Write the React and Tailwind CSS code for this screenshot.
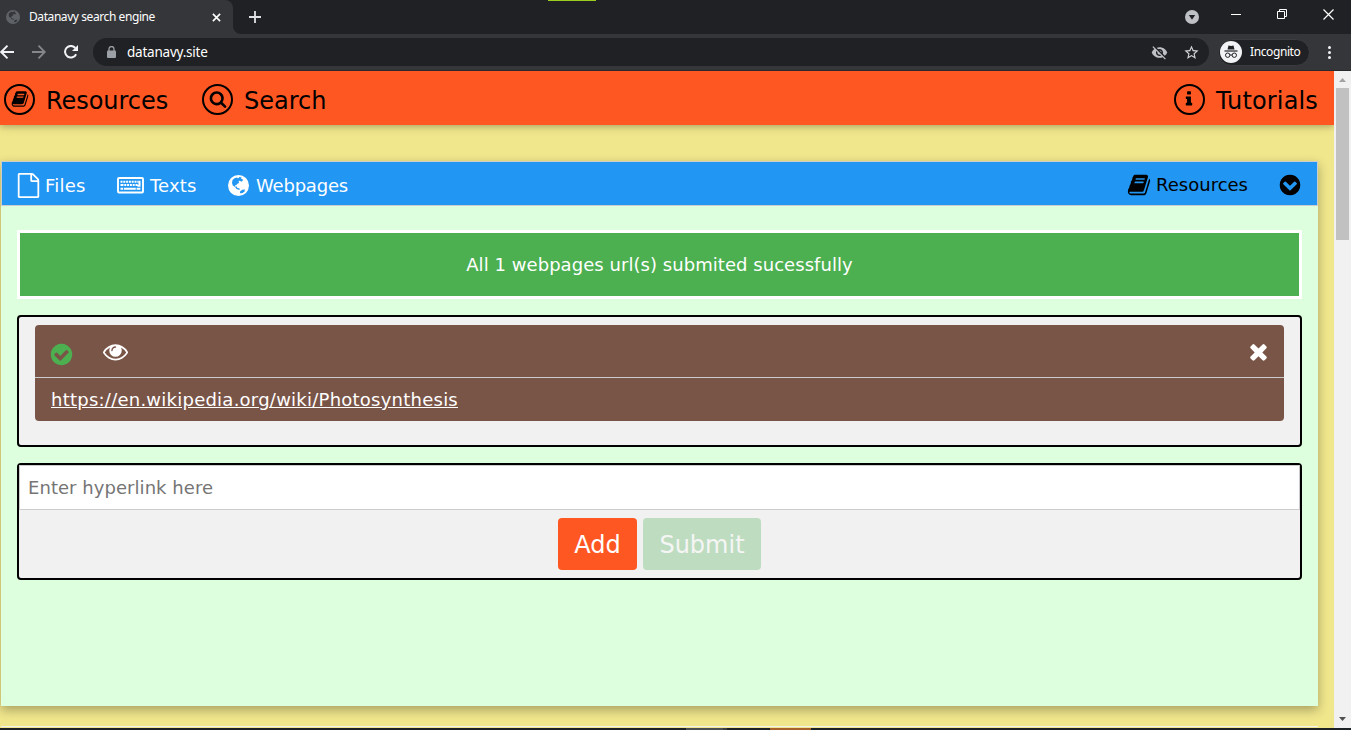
import React from "react";

const PATHS = {
  book: "M1703 478q40 57 18 129l-275 906q-19 64-76.5 107.5t-122.5 43.5h-923q-77 0-148.5-53.5t-99.5-131.5q-24-67-2-127 0-4 3-27t4-37q1-8-3-21.5t-3-19.5q2-11 8-21t16.5-23.5 16.5-23.5q23-38 45-91.5t30-91.5q3-10 .5-30t-.5-28q3-11 17-28t17-23q21-36 42-92t25-90q1-9-2.5-32t.5-28q4-13 22-30.5t22-22.5q19-26 42.5-84.5t27.5-96.5q1-8-3-25.5t-2-26.5q2-8 9-18t18-23 17-21q8-12 16.5-30.5t15-35 16-36 19.5-32 26.5-23.5 36-11.5 47.5 5.5l-1 3q38-9 51-9h761q74 0 114 56t18 130l-274 906q-36 119-71.5 153.5t-128.5 34.5h-869q-27 0-38 15-11 16-1 43 24 70 144 70h923q29 0 56-15.5t35-41.5l300-987q7-22 5-57 38 15 59 43zm-1064 2q-4 13 2 22.5t20 9.5h608q13 0 25.5-9.5t16.5-22.5l21-64q4-13-2-22.5t-20-9.5h-608q-13 0-25.5 9.5t-16.5 22.5zm-83 256q-4 13 2 22.5t20 9.5h608q13 0 25.5-9.5t16.5-22.5l21-64q4-13-2-22.5t-20-9.5h-608q-13 0-25.5 9.5t-16.5 22.5z",
  search: "M1216 832q0-185-131.5-316.5t-316.5-131.5-316.5 131.5-131.5 316.5 131.5 316.5 316.5 131.5 316.5-131.5 131.5-316.5zm512 832q0 52-38 90t-90 38q-54 0-90-38l-343-342q-179 124-399 124-143 0-273.5-55.5t-225-150-150-225-55.5-273.5 55.5-273.5 150-225 225-150 273.5-55.5 273.5 55.5 225 150 150 225 55.5 273.5q0 220-124 399l343 343q37 37 37 90z",
  info: "M1216 1344v128q0 26-19 45t-45 19h-512q-26 0-45-19t-19-45v-128q0-26 19-45t45-19h64v-384h-64q-26 0-45-19t-19-45v-128q0-26 19-45t45-19h384q26 0 45 19t19 45v576h64q26 0 45 19t19 45zm-128-1152v192q0 26-19 45t-45 19h-256q-26 0-45-19t-19-45v-192q0-26 19-45t45-19h256q26 0 45 19t19 45z",
  eye: "M1664 960q-152-236-381-353 61 104 61 225 0 185-131.5 316.5t-316.5 131.5-316.5-131.5-131.5-316.5q0-121 61-225-229 117-381 353 133 205 333.5 326.5t434.5 121.5 434.5-121.5 333.5-326.5zm-720-384q0-20-14-34t-34-14q-125 0-214.5 89.5t-89.5 214.5q0 20 14 34t34 14 34-14 14-34q0-86 61-147t147-61q20 0 34-14t14-34zm848 384q0 34-20 69-140 230-376.5 368.5t-499.5 138.5-499.5-139-376.5-368q-20-35-20-69t20-69q140-229 376.5-368t499.5-139 499.5 139 376.5 368q20 35 20 69z",
  times: "M1490 1322q0 40-28 68l-136 136q-28 28-68 28t-68-28l-294-294-294 294q-28 28-68 28t-68-28l-136-136q-28-28-28-68t28-68l294-294-294-294q-28-28-28-68t28-68l136-136q28-28 68-28t68 28l294 294 294-294q28-28 68-28t68 28l136 136q28 28 28 68t-28 68l-294 294 294 294q28 28 28 68z",
  check: "M1412 734q0-28-18-46l-91-90q-19-19-45-19t-45 19l-408 407-226-226q-19-19-45-19t-45 19l-91 90q-18 18-18 46 0 27 18 45l362 362q19 19 45 19 27 0 46-19l543-543q18-18 18-45zm252 162q0 209-103 385.5t-279.5 279.5-385.5 103-385.5-103-279.5-279.5-103-385.5 103-385.5 279.5-279.5 385.5-103 385.5 103 279.5 279.5 103 385.5z",
  chevron: "M941 1293l454-454q19-19 19-45t-19-45l-102-102q-19-19-45-19t-45 19l-307 307-307-307q-19-19-45-19t-45 19l-102 102q-19 19-19 45t19 45l454 454q19 19 45 19t45-19zM1664 896q0 209-103 385.5t-279.5 279.5-385.5 103-385.5-103-279.5-279.5-103-385.5 103-385.5 279.5-279.5 385.5-103 385.5 103 279.5 279.5 103 385.5z",
  file: "M1596 380q28 28 48 76t20 88v1152q0 40-28 68t-68 28h-1344q-40 0-68-28t-28-68v-1600q0-40 28-68t68-28h896q40 0 88 20t76 48zm-444-244v376h376q-10-29-22-41l-313-313q-12-12-41-22zm384 1528v-1024h-416q-40 0-68-28t-28-68v-416h-768v1536h1280z",
};

function Icon({ name, className }) {
  return (
    <svg viewBox="0 0 1792 1792" fill="currentColor" fillRule="evenodd" className={className}>
      <path d={PATHS[name]} />
    </svg>
  );
}

function Globe({ className, land }) {
  return (
    <svg viewBox="0 0 21 21" className={className}>
      <circle cx="10.5" cy="10.5" r="10.5" fill="currentColor" />
      <path
        fill={land}
        d="M4.500 5 6.500 3.200 9 2.500l1 .9 1.600-1.300 2 .3-.6 1.300 1.800.6-.3 2-1.700.3-.9-1-1.400 1 .6 1.500-1.800.6-.9 1.400-1.500.5.4 1.200 1.500-.2.5 1.300 1.900.4.800 1-1.200.5-2.200-.9-1.500-1.900L4.800 10.500 4 8zM12 16.500l2.300-1.700 2.600-.3-.3 1.900-2 1.600-2.600.3z"
      />
    </svg>
  );
}

function Keyboard() {
  return (
    <svg viewBox="0 0 27 17" className="h-[17px] w-[27px]" fill="none">
      <rect x="1" y="1" width="25" height="14.500" rx="1" stroke="white" strokeWidth="1.900" />
      <path
        d="M3.500 4.700h2m.8 0h2m.8 0h2m.8 0h2m.8 0h2m.8 0h2m.8 0h1M3.500 8h3m.8 0h2m.8 0h2m.8 0h2m.8 0h2m.8 0h2M3.500 11.700h2.500m.8 0h12m.8 0h3.800M22.500 3.800v5h-2"
        stroke="white"
        strokeWidth="2"
      />
    </svg>
  );
}

function Ring({ name }) {
  return (
    <span className="flex size-[31px] items-center justify-center rounded-full border-[2.5px] border-black">
      <Icon name={name} className="size-[18px]" />
    </span>
  );
}

function TitleBar() {
  return (
    <div className="relative flex h-[34px] bg-[#202124]">
      <div className="flex h-full w-[233px] items-center rounded-tr-[8px] bg-[#35363a] pl-[6px] text-white">
        <Globe className="size-[14px] text-[#5f6368]" land="#35363a" />
        <span className="ml-[9px] w-[180px] text-[12px] tracking-[-0.42px]">Datanavy search engine</span>
        <svg viewBox="0 0 10 10" className="ml-[3px] size-[9px]" stroke="white" strokeWidth="1.800">
          <path d="M1 1l8 8M9 1l-8 8" />
        </svg>
      </div>
      <div className="flex h-full w-[8px] items-end bg-[#35363a]">
        <div className="h-full w-full rounded-bl-[8px] bg-[#202124]" />
      </div>
      <svg viewBox="0 0 12 12" className="mt-[11px] ml-[8px] size-[12px]" stroke="#dfe1e5" strokeWidth="1.800">
        <path d="M6 0v12M0 6h12" />
      </svg>
      <div className="absolute top-0 left-[548px] h-[1px] w-[48px] bg-[#9acd1e]" />
      <div className="ml-auto flex h-full items-start">
        <svg viewBox="0 0 14 14" className="mt-[10px] mr-[32px] size-[14px]">
          <circle cx="7" cy="7" r="7" fill="#bdc1c6" />
          <path d="M3.800 5h6.400L7 9.800z" fill="#202124" />
        </svg>
        <div className="mt-[14px] mr-[36px] h-[1px] w-[10px] bg-white" />
        <svg viewBox="0 0 10 10" className="mt-[9px] mr-[36px] size-[10px]" stroke="white" fill="none">
          <path d="M.5 2.500h7v7h-7zM2.500 2.500v-2h7v7h-2" />
        </svg>
        <svg viewBox="0 0 11 11" className="mt-[9px] mr-[17px] size-[11px]" stroke="white" strokeWidth="1.200">
          <path d="M.5.5l10 10M10.500.5l-10 10" />
        </svg>
      </div>
    </div>
  );
}

function Toolbar() {
  return (
    <div className="flex h-[37px] items-center border-b border-[#28292c] bg-[#35363a]">
      <svg viewBox="0 0 14 14" className="h-[14px] w-[14px]" fill="none" stroke="#f1f3f4" strokeWidth="1.900">
        <path d="M14 7H1M7.500.7 1.200 7l6.300 6.300" />
      </svg>
      <svg viewBox="0 0 14 14" className="ml-[18px] size-[14px]" fill="none" stroke="#85878a" strokeWidth="1.800">
        <path d="M0 7h13M6.500.7 12.800 7l-6.300 6.300" />
      </svg>
      <svg viewBox="0 0 14 14" className="ml-[18px] size-[14px]">
        <path d="M12.100 9.200A5.800 5.800 0 1 1 11.300 3" fill="none" stroke="#f1f3f4" strokeWidth="2" />
        <path d="M14 0v6H8z" fill="#f1f3f4" />
      </svg>
      <div className="ml-[15px] flex h-[28px] w-[1116px] items-center rounded-full bg-[#202124]">
        <svg viewBox="0 0 9 12" className="ml-[14px] h-[12px] w-[9px]">
          <rect y="4.500" width="9" height="7.500" rx="1" fill="#9aa0a6" />
          <path d="M2 5V3a2.500 2.500 0 0 1 5 0v2" fill="none" stroke="#9aa0a6" strokeWidth="1.300" />
        </svg>
        <span className="ml-[11px] text-[13.500px] tracking-[-0.22px] text-white">datanavy.site</span>
        <svg viewBox="0 0 24 24" className="mr-[15px] ml-auto size-[17px]" fill="#bdc1c6">
          <path d="M12 7c2.760 0 5 2.240 5 5 0 .65-.13 1.260-.36 1.830l2.920 2.920c1.510-1.260 2.700-2.890 3.430-4.750-1.730-4.390-6-7.500-11-7.500-1.400 0-2.740.25-3.980.7l2.160 2.160C10.740 7.130 11.350 7 12 7zM2 4.270l2.280 2.280.46.46C3.080 8.300 1.780 10.020 1 12c1.730 4.390 6 7.500 11 7.500 1.550 0 3.030-.3 4.380-.84l.42.42L19.730 22 21 20.730 3.270 3 2 4.270zM7.530 9.800l1.550 1.550c-.05.21-.08.43-.08.65 0 1.660 1.340 3 3 3 .22 0 .44-.03.65-.08l1.550 1.550c-.67.33-1.410.53-2.200.53-2.760 0-5-2.240-5-5 0-.79.2-1.530.53-2.200zm4.310-.78l3.150 3.150.02-.16c0-1.660-1.340-3-3-3l-.17.010z" />
        </svg>
        <svg viewBox="0 0 24 24" className="mr-[9px] size-[17px]" fill="#d0d3d7">
          <path d="M22 9.240l-7.190-.62L12 2 9.190 8.630 2 9.240l5.460 4.730L5.820 21 12 17.270 18.180 21l-1.630-7.030L22 9.240zM12 15.400l-3.760 2.270 1-4.280-3.320-2.880 4.380-.38L12 6.100l1.710 4.040 4.380.38-3.320 2.880 1 4.280L12 15.400z" />
        </svg>
      </div>
      <div className="ml-[9px] flex h-[27px] w-[92px] items-center rounded-full border border-[#3c3d40] bg-[#202124] pl-[1px]">
        <svg viewBox="0 0 22 22" className="size-[22px] shrink-0">
          <circle cx="11" cy="11" r="11" fill="#f1f3f4" />
          <path d="M7.500 8.500 8.500 4.500l2.500.6 2.500-.6 1 4z" fill="#202124" />
          <path d="M4.500 10h13" stroke="#202124" strokeWidth="1.200" />
          <g fill="none" stroke="#202124" strokeWidth="1">
            <circle cx="7.700" cy="14.200" r="2.200" />
            <circle cx="14.300" cy="14.200" r="2.200" />
            <path d="M9.900 14h2.200" />
          </g>
        </svg>
        <span className="ml-[8px] text-[12px] tracking-[-0.4px] text-white">Incognito</span>
      </div>
      <div className="ml-[18px] flex flex-col gap-[2px]">
        <div className="size-[3px] rounded-full bg-[#f1f3f4]" />
        <div className="size-[3px] rounded-full bg-[#f1f3f4]" />
        <div className="size-[3px] rounded-full bg-[#f1f3f4]" />
      </div>
    </div>
  );
}

function SiteHeader() {
  return (
    <header className="relative flex h-[54px] items-center bg-[#ff5722] pt-[2px] pl-[4px] text-[24px] text-black shadow-[0_2px_5px_0_rgba(0,0,0,0.16),0_2px_10px_0_rgba(0,0,0,0.12)]">
      <div className="flex w-[198px] items-center">
        <Ring name="book" />
        <span className="mt-[3px] ml-[11px] tracking-[-0.05px]">Resources</span>
      </div>
      <div className="flex items-center">
        <Ring name="search" />
        <span className="mt-[3px] ml-[11px]">Search</span>
      </div>
      <div className="mr-[16px] ml-auto flex items-center">
        <Ring name="info" />
        <span className="mt-[3px] ml-[11px] tracking-[0.15px]">Tutorials</span>
      </div>
    </header>
  );
}

function CardNav() {
  return (
    <nav className="flex h-[45px] items-center border border-[#ccc] bg-[#2196f3] pt-[3px] pr-[15px] pl-[15px] text-[18px] text-white">
      <div className="flex w-[100px] items-center">
        <Icon name="file" className="ml-[-1px] size-[25px]" />
        <span className="ml-[4px] tracking-[0.2px]">Files</span>
      </div>
      <div className="flex w-[111px] items-center">
        <Keyboard />
        <span className="ml-[6px] tracking-[0.15px]">Texts</span>
      </div>
      <div className="flex items-center">
        <Globe className="size-[21px]" land="#2196f3" />
        <span className="ml-[7px] tracking-[-0.2px]">Webpages</span>
      </div>
      <div className="ml-auto flex items-center text-black">
        <Icon name="book" className="size-[24px]" />
        <span className="mb-[1px] ml-[5px]">Resources</span>
        <Icon name="chevron" className="ml-[30px] size-[24px]" />
      </div>
    </nav>
  );
}

function LinkList() {
  return (
    <div className="mt-[16px] h-[132px] rounded-[4px] border-2 border-black bg-[#f1f1f1] px-[16px] pt-[8px]">
      <div className="h-[96px] overflow-hidden rounded-[4px] bg-[#795548] text-white">
        <div className="flex h-[53px] items-center border-b border-[#ccc] px-[16px]">
          <Icon name="check" className="mt-[6px] ml-[-2px] size-[25px] text-[#4caf50]" />
          <Icon name="eye" className="ml-[29px] size-[25px]" />
          <Icon name="times" className="mt-[1px] mr-[-3px] ml-auto size-[25px]" />
        </div>
        <div className="px-[16px] pt-[8px] text-[18px] leading-[27px]">
          <a className="tracking-[0.24px] underline">https://en.wikipedia.org/wiki/Photosynthesis</a>
        </div>
      </div>
    </div>
  );
}

function LinkForm() {
  return (
    <div className="mt-[16px] h-[117px] rounded-[4px] border-2 border-black bg-[#f1f1f1]">
      <input
        className="block h-[45px] w-full border border-[#ccc] bg-white px-[8px] text-[18px] tracking-[0.05px] placeholder:text-[#757575]"
        placeholder="Enter hyperlink here"
      />
      <div className="mt-[8px] flex justify-center gap-[6px] text-[24px] text-white">
        <button className="h-[52px] w-[79px] rounded-[4px] bg-[#ff5722] pt-[2px]">Add</button>
        <button className="h-[52px] w-[118px] rounded-[4px] bg-[#4caf50] pt-[2px] opacity-30">Submit</button>
      </div>
    </div>
  );
}

function Scrollbar() {
  return (
    <div className="flex w-[17px] flex-col items-center bg-[#f1f1f1]">
      <svg viewBox="0 0 17 17" className="size-[17px] shrink-0">
        <path d="M5 11h7L8.500 7z" fill="#a3a3a3" />
      </svg>
      <div className="h-[152px] w-[13px] bg-[#c1c1c1]" />
      <svg viewBox="0 0 17 17" className="mt-auto size-[17px] shrink-0">
        <path d="M5 6h7l-3.500 4z" fill="#505050" />
      </svg>
    </div>
  );
}

export default function App() {
  return (
    <div className="flex h-[730px] w-[1351px] flex-col overflow-hidden">
      <div className="font-['Noto_Sans',sans-serif]">
        <TitleBar />
        <Toolbar />
      </div>
      <div className="flex h-[657px]">
        <div className="flex w-[1334px] flex-col overflow-hidden bg-[#f0e68c] font-['DejaVu_Sans',Verdana,sans-serif]">
          <SiteHeader />
          <main className="mt-[36px] ml-[1px] h-[545px] w-[1317px] shrink-0 bg-[#ddffdd] shadow-[0_4px_10px_0_rgba(0,0,0,0.3)]">
            <CardNav />
            <div className="px-[16px] pt-[24px]">
              <div className="flex h-[69px] items-center justify-center border-[3px] border-white bg-[#4caf50] text-[18px] tracking-[0.05px] text-white">
                All 1 webpages url(s) submited sucessfully
              </div>
              <LinkList />
              <LinkForm />
            </div>
          </main>
          <div className="mt-[20px] ml-[1px] h-[1px] w-[1317px] shrink-0 bg-[#f1f1f1]" />
        </div>
        <Scrollbar />
      </div>
      <div className="flex h-[2px] bg-[#1c2126]">
        <div className="ml-[686px] h-full w-[37px] bg-[#4b5052]" />
        <div className="h-full w-[4px] bg-[#3a3f42]" />
        <div className="ml-[43px] h-full w-[41px] bg-[#a8622b]" />
      </div>
    </div>
  );
}
